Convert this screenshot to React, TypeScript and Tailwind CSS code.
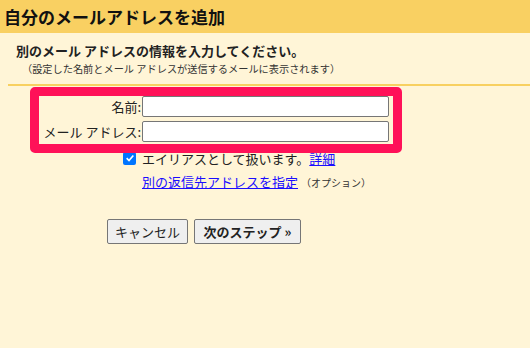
export default function App() {
  return (
    <div className="relative w-[530px] h-[348px] bg-[#fff5d7] text-[#222] font-['Noto_Sans_CJK_JP','Noto_Sans',sans-serif] overflow-hidden">
      {/* Header */}
      <div className="h-[33px] bg-[#f9d062] flex items-center pl-[4px]">
        <h1 className="text-[17px] font-bold leading-none text-[#111]">自分のメールアドレスを追加</h1>
      </div>

      {/* Intro */}
      <div className="pl-[16px] pt-[9px]">
        <p className="text-[13px] font-bold leading-[17px]">別のメール アドレスの情報を入力してください。</p>
        <p className="text-[10.2px] leading-[14px] mt-[3px] pl-[6px] text-[#333]">
          （設定した名前とメール アドレスが送信するメールに表示されます）
        </p>
      </div>
      <div className="ml-[8px] mt-[8px] h-[2px] bg-[#f8d060]" />

      {/* Form */}
      <div className="pt-[10px] flex flex-col gap-[4px] text-[13px]">
        <div className="flex items-center h-[21px]">
          <label className="w-[142px] text-right pr-[1px] leading-none">名前:</label>
          <input className="w-[247px] h-[21px] bg-white border border-[#767676] rounded-[2px] outline-none" />
        </div>
        <div className="flex items-center h-[21px]">
          <label className="w-[142px] text-right pr-[1px] leading-none">メール アドレス:</label>
          <input className="w-[247px] h-[21px] bg-white border border-[#767676] rounded-[2px] outline-none" />
        </div>
      </div>

      <div className="pl-[123px] mt-[8px] flex items-center h-[16px] text-[13px]">
        <span className="w-[13px] h-[13px] rounded-[2px] bg-[#0075ff] flex items-center justify-center">
          <svg viewBox="0 0 12 12" className="w-[10px] h-[10px]">
            <path d="M2 6.2 L4.8 9 L10 3" fill="none" stroke="white" strokeWidth="2" />
          </svg>
        </span>
        <span className="ml-[6px] leading-none">エイリアスとして扱います。</span>
        <a className="text-[#1a0dff] underline leading-none">詳細</a>
      </div>

      <div className="pl-[142px] mt-[9px] flex items-baseline h-[16px]">
        <a className="text-[13px] text-[#1a0dff] underline leading-none">別の返信先アドレスを指定</a>
        <span className="ml-[3px] text-[10px] leading-none text-[#333]">（オプション）</span>
      </div>

      <div className="pl-[107px] mt-[28px] flex gap-[6px] text-[13px]">
        <button className="w-[81px] h-[25px] bg-[#efefef] border border-[#767676] rounded-[2px] leading-none">キャンセル</button>
        <button className="w-[107px] h-[25px] bg-[#efefef] border border-[#767676] rounded-[2px] font-bold leading-none">次のステップ »</button>
      </div>

      {/* Highlight annotation */}
      <div className="absolute left-[30px] top-[87px] w-[372px] h-[66px] border-[9px] border-[#ff1158] rounded-[5px] pointer-events-none" />
    </div>
  );
}
